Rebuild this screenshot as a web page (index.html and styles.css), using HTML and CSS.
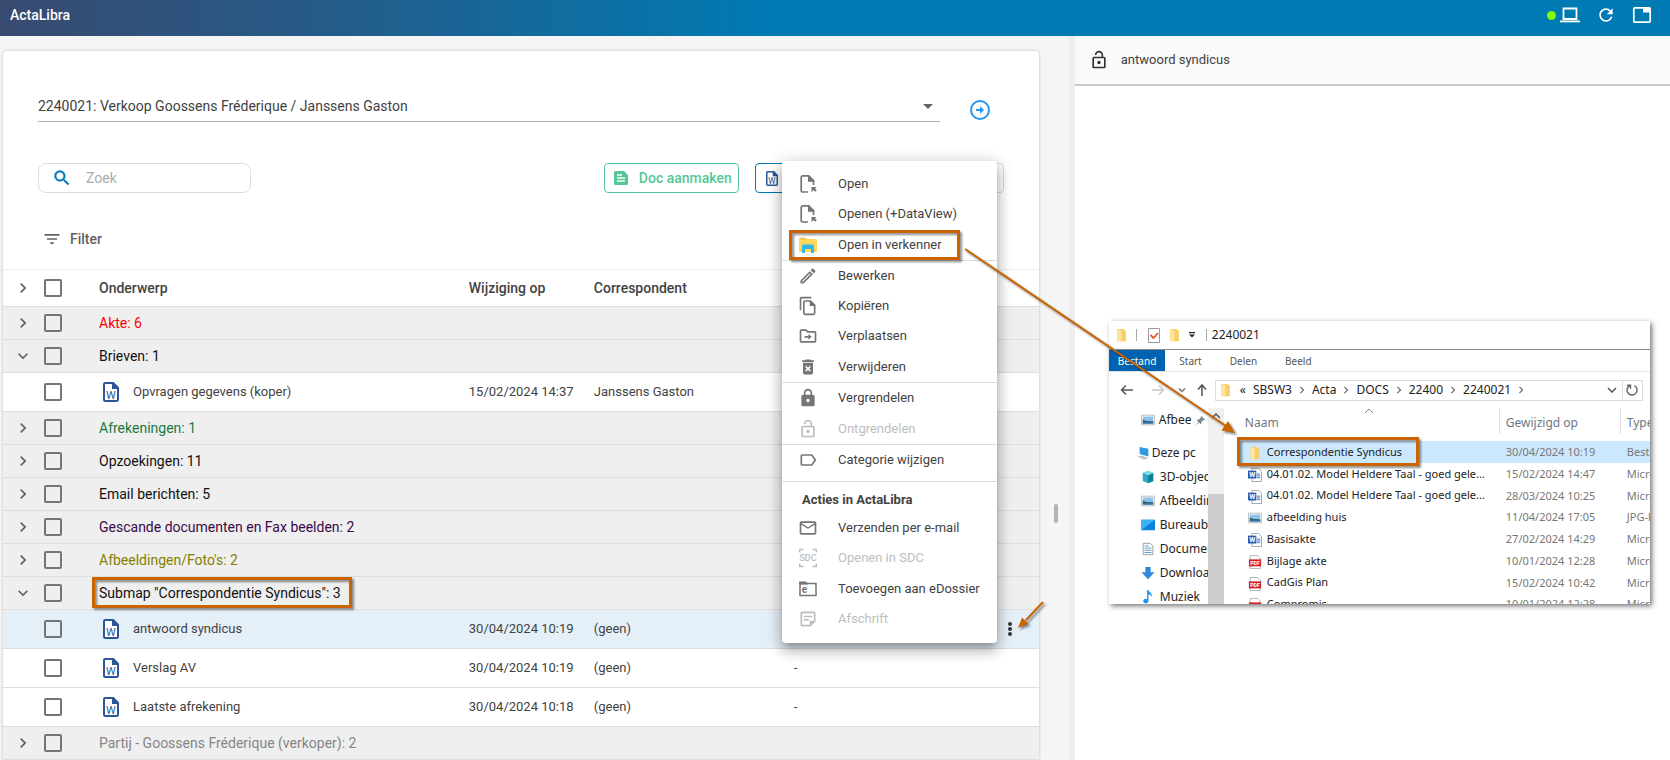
FILE: index.html
```html
<!DOCTYPE html>
<html lang="nl">
<head>
<meta charset="utf-8">
<title>ActaLibra</title>
<link rel="stylesheet" href="styles.css">
</head>
<body>
<svg class="defs" aria-hidden="true">
  <symbol id="chev" viewBox="0 0 24 24"><path d="M10 6L8.59 7.41 13.17 12l-4.58 4.59L10 18l6-6z"/></symbol>
  <symbol id="chevdown" viewBox="0 0 24 24"><path d="M16.59 8.59L12 13.17 7.41 8.59 6 10l6 6 6-6z"/></symbol>
  <symbol id="word" viewBox="0 0 16 20">
    <path d="M1 2.200A1.200 1.200 0 0 1 2.200 1H10l5 5v11.800a1.200 1.200 0 0 1-1.200 1.200H2.200A1.200 1.200 0 0 1 1 17.800z" fill="#fff" stroke="#2b579a" stroke-width="2"/>
    <path d="M9 0h1.500L16 5.500V7H9z" fill="#2b579a"/>
    <text x="8" y="17" text-anchor="middle" class="glyph-w">W</text>
  </symbol>
  <symbol id="openfile" viewBox="0 0 20 20">
    <path d="M10 18H4.700A1.500 1.500 0 0 1 3.200 16.500V3.400A1.500 1.500 0 0 1 4.700 1.900H10.500L15.500 6.900V11" fill="none" stroke="currentColor" stroke-width="1.700"/>
    <path d="M10 1.200h1.200L16.400 6.500V7.700H10zM13.500 13H18.500L17 14.500 18.800 16.300 17.300 17.800 15.500 16 13.500 18z"/>
  </symbol>
  <symbol id="verkenner" viewBox="0 0 20 20">
    <path d="M1 3.500a1 1 0 0 1 1-1h5.500l1.500 1.500h9a1 1 0 0 1 1 1V17H1z" fill="#ffd75e"/>
    <path d="M2 3.200h5l1 1.200H2z" fill="#f2c14b"/>
    <path d="M4 18v-7a1.500 1.500 0 0 1 1.500-1.500h9A1.500 1.500 0 0 1 16 11v7h-3v-4H7v4z" fill="#2bb7e8"/>
  </symbol>
  <symbol id="edit" viewBox="0 0 24 24"><path d="M14.060 9.020l.92.92L5.920 19H5v-.92l9.060-9.060M17.660 3c-.25 0-.51.1-.7.29l-1.830 1.830 3.750 3.750 1.830-1.830c.39-.39.39-1.020 0-1.410l-2.340-2.340c-.2-.2-.45-.29-.71-.29zm-3.600 3.190L3 17.250V21h3.750L17.810 9.940l-3.750-3.750z"/></symbol>
  <symbol id="copy" viewBox="0 0 24 24"><path d="M16 1H4c-1.100 0-2 .9-2 2v14h2V3h12V1z"/><path d="M7 7.500A1.500 1.500 0 0 1 8.500 6H15l5 5v9.500a1.500 1.500 0 0 1-1.500 1.500h-10A1.500 1.500 0 0 1 7 20.500z" fill="none" stroke="currentColor" stroke-width="2"/><path d="M14 6h1.500l5 5v1H14z"/></symbol>
  <symbol id="move" viewBox="0 0 24 24"><path d="M20 6h-8l-2-2H4c-1.100 0-2 .9-2 2v12c0 1.100.9 2 2 2h16c1.100 0 2-.9 2-2V8c0-1.100-.9-2-2-2zm0 12H4V6h5.170l2 2H20v10zM12.500 9.500v2.500H8v2h4.500v2.500L16.500 13z"/></symbol>
  <symbol id="delete" viewBox="0 0 24 24"><path d="M6 19c0 1.100.9 2 2 2h8c1.100 0 2-.9 2-2V7H6v12zm2.460-7.120l1.410-1.410L12 12.590l2.120-2.120 1.410 1.410L13.410 14l2.120 2.120-1.410 1.410L12 15.410l-2.120 2.120-1.410-1.410L10.590 14l-2.130-2.120zM15.500 4l-1-1h-5l-1 1H5v2h14V4z"/></symbol>
  <symbol id="lock" viewBox="0 0 24 24"><path d="M18 8h-1V6c0-2.760-2.240-5-5-5S7 3.240 7 6v2H6c-1.100 0-2 .9-2 2v10c0 1.100.9 2 2 2h12c1.100 0 2-.9 2-2V10c0-1.100-.9-2-2-2zm-6 9c-1.100 0-2-.9-2-2s.9-2 2-2 2 .9 2 2-.9 2-2 2zM9 8V6c0-1.660 1.340-3 3-3s3 1.340 3 3v2H9z"/></symbol>
  <symbol id="unlock" viewBox="0 0 24 24"><path d="M12 17c1.100 0 2-.9 2-2s-.9-2-2-2-2 .9-2 2 .9 2 2 2zm6-9h-1V6c0-2.760-2.240-5-5-5S7 3.240 7 6h1.900c0-1.710 1.390-3.100 3.100-3.100 1.710 0 3.100 1.390 3.100 3.100v2H6c-1.100 0-2 .9-2 2v10c0 1.100.9 2 2 2h12c1.100 0 2-.9 2-2V10c0-1.100-.9-2-2-2zm0 12H6V10h12v10z"/></symbol>
  <symbol id="label" viewBox="0 0 24 24"><path d="M17.630 5.840C17.270 5.330 16.670 5 16 5L5 5.010C3.900 5.010 3 5.900 3 7v10c0 1.100.9 1.990 2 1.990L16 19c.67 0 1.270-.33 1.630-.84L22 12l-4.370-6.160zM16 17H5V7h11l3.550 5L16 17z"/></symbol>
  <symbol id="mail" viewBox="0 0 24 24"><path d="M22 6c0-1.100-.9-2-2-2H4c-1.100 0-2 .9-2 2v12c0 1.100.9 2 2 2h16c1.100 0 2-.9 2-2V6zm-2 0l-8 5-8-5h16zm0 12H4V8l8 5 8-5v10z"/></symbol>
  <symbol id="sdc" viewBox="0 0 20 20"><path d="M5.500 1.500H1.700v3M14.500 1.500H18.300v3M5.500 18.500H1.700v-3M14.500 18.500H18.300v-3" fill="none" stroke="currentColor" stroke-width="1.500"/><text x="10" y="13" text-anchor="middle" class="glyph-sdc">SDC</text></symbol>
  <symbol id="edossier" viewBox="0 0 20 20"><path d="M2 4.500h16V16.500H2z" fill="none" stroke="currentColor" stroke-width="1.500"/><path d="M1.200 2.500h7l1.500 3H1.200z"/><text x="6.500" y="14" text-anchor="middle" class="glyph-e">e</text></symbol>
  <symbol id="note" viewBox="0 0 24 24"><path d="M19 3H5c-1.100 0-2 .9-2 2v14c0 1.100.9 2 2 2h10l6-6V5c0-1.100-.9-2-2-2zm0 11h-5v5H5V5h14v9zM7 8h10v2H7zM7 12h6v2H7z"/></symbol>
  <symbol id="folder" viewBox="0 0 12 16"><path d="M1 1h7l3 2v12H1z" fill="#f6cf68"/><path d="M1 1l5 2v13l-5-1.500z" fill="#ffe49b"/></symbol>
  <symbol id="wdoc" viewBox="0 0 16 16"><path d="M4.500.5H12l3.500 3.500v11.500h-11z" fill="#fff" stroke="#8c9bb0"/><path d="M10 7h4M10 9h4M10 11h4" stroke="#2b6cc4"/><path d="M0 3h9.500v9H0z" fill="#2a5fb4"/><text x="4.800" y="10.500" text-anchor="middle" class="glyph-doc">W</text></symbol>
  <symbol id="pic" viewBox="0 0 16 16"><path d="M.5 2.500h15v11H.5z" fill="#fff" stroke="#b5b5b5"/><path d="M2 4h12v8H2z" fill="#8cc1ea"/><path d="M2 7.500l4 1.500 8 .5V12H2z" fill="#2f5f6e"/><path d="M2 10.500h12V12H2z" fill="#3b78b5"/></symbol>
  <symbol id="pdf" viewBox="0 0 16 16"><path d="M2.500.5H11l3 3v12H2.500z" fill="#fff" stroke="#aaa"/><path d="M1 5h14v8H1z" fill="#d51f2d"/><text x="8" y="11.500" text-anchor="middle" class="glyph-pdf">PDF</text></symbol>
</svg>

<header class="topbar">
  <h1 class="brand">ActaLibra</h1>
  <div class="topbar-tools">
    <span class="online"></span>
    <svg class="ic20" viewBox="0 0 20 20"><path d="M3.500 3.500h13v10.500h-13z" fill="none" stroke="#fff" stroke-width="1.800"/><path d="M0 15.500h20v1.800H0z"/></svg>
    <button class="bare refresh" aria-label="Vernieuwen"><svg class="ic20" viewBox="0 0 24 24"><path d="M17.650 6.350A7.958 7.958 0 0 0 12 4c-4.420 0-7.990 3.580-7.990 8s3.570 8 7.990 8c3.730 0 6.840-2.550 7.730-6h-2.080A5.990 5.990 0 0 1 12 18c-3.310 0-6-2.690-6-6s2.690-6 6-6c1.660 0 3.140.69 4.220 1.780L13 11h7V4l-2.350 2.350z"/></svg></button>
    <button class="bare" aria-label="Tabblad"><svg class="ic20" viewBox="0 0 20 20"><path d="M2.700 2.900h14.600a.9.900 0 0 1 .9.900v12.400a.9.900 0 0 1-.9.900H2.700a.9.900 0 0 1-.9-.9V3.800a.9.900 0 0 1 .9-.9z" fill="none" stroke="#fff" stroke-width="1.700"/><path d="M11 3h7v4.500h-7z"/></svg></button>
  </div>
</header>

<main class="workspace">
  <section class="left">
    <div class="card">
      <div class="dossier">
        <div class="select-wrap">
          <select class="dossier-select" aria-label="Dossier"><option>2240021: Verkoop Goossens Fréderique / Janssens Gaston</option></select>
          <svg class="caret" viewBox="0 0 10 5"><path d="M0 0h10L5 5z"/></svg>
        </div>
        <button class="bare go" aria-label="Ga naar dossier"><svg class="ic20" viewBox="0 0 20 20"><circle cx="10" cy="10" r="9" fill="none" stroke="currentColor" stroke-width="2"/><path d="M6 9h4V6.200L14 10l-4 3.800V11H6z"/></svg></button>
      </div>
      <div class="toolbar">
        <label class="search">
          <svg class="ic20" viewBox="0 0 24 24"><path d="M15.500 14h-.79l-.28-.27A6.471 6.471 0 0 0 16 9.500 6.500 6.500 0 1 0 9.500 16c1.610 0 3.090-.59 4.230-1.570l.27.28v.79l5 4.990L20.490 19l-4.990-5zm-6 0C7.010 14 5 11.990 5 9.500S7.010 5 9.500 5 14 7.010 14 9.500 11.990 14 9.500 14z" stroke="currentColor" stroke-width=".5"/></svg>
          <input type="search" placeholder="Zoek">
        </label>
        <div class="actions">
          <button class="btn green"><svg class="btn-ic" viewBox="0 0 14 14"><path d="M1.500 0H10l4 4v8.500a1.500 1.500 0 0 1-1.500 1.500h-11A1.500 1.500 0 0 1 0 12.500v-11A1.500 1.500 0 0 1 1.500 0z"/><path d="M3 4h5M3 7h8M3 10h8" stroke="#fff" stroke-width="1.300"/></svg>Doc aanmaken</button>
          <button class="btn blue" aria-label="Word"><svg class="word-sm"><use href="#word"/></svg></button>
          <button class="btn grey" aria-label="Meer" disabled></button>
        </div>
      </div>
      <button class="bare filter"><svg class="ic20" viewBox="0 0 24 24"><path d="M10 18h4v-2h-4v2zM3 6v2h18V6H3zm3 7h12v-2H6v2z"/></svg>Filter</button>

      <table class="docs">
        <colgroup><col class="c-exp"><col class="c-chk"><col><col class="c-date"><col class="c-corr"><col class="c-extra"><col class="c-more"></colgroup>
        <thead><tr><th><svg class="chev"><use href="#chev"/></svg></th><th><input type="checkbox" aria-label="Alles"></th><th>Onderwerp</th><th>Wijziging op</th><th>Correspondent</th><th></th><th></th></tr></thead>
        <tbody>
          <tr class="group red"><td><svg class="chev"><use href="#chev"/></svg></td><td><input type="checkbox" aria-label="Akte"></td><td colspan="5">Akte: 6</td></tr>
          <tr class="group"><td><svg class="chev"><use href="#chevdown"/></svg></td><td><input type="checkbox" aria-label="Brieven"></td><td colspan="5">Brieven: 1</td></tr>
          <tr class="doc"><td></td><td><input type="checkbox" aria-label="Opvragen gegevens (koper)"></td><td><span class="name"><svg class="word"><use href="#word"/></svg>Opvragen gegevens (koper)</span></td><td>15/02/2024 14:37</td><td>Janssens Gaston</td><td></td><td></td></tr>
          <tr class="group green"><td><svg class="chev"><use href="#chev"/></svg></td><td><input type="checkbox" aria-label="Afrekeningen"></td><td colspan="5">Afrekeningen: 1</td></tr>
          <tr class="group"><td><svg class="chev"><use href="#chev"/></svg></td><td><input type="checkbox" aria-label="Opzoekingen"></td><td colspan="5">Opzoekingen: 11</td></tr>
          <tr class="group"><td><svg class="chev"><use href="#chev"/></svg></td><td><input type="checkbox" aria-label="Email berichten"></td><td colspan="5">Email berichten: 5</td></tr>
          <tr class="group purple"><td><svg class="chev"><use href="#chev"/></svg></td><td><input type="checkbox" aria-label="Gescande documenten"></td><td colspan="5">Gescande documenten en Fax beelden: 2</td></tr>
          <tr class="group olive"><td><svg class="chev"><use href="#chev"/></svg></td><td><input type="checkbox" aria-label="Afbeeldingen"></td><td colspan="5">Afbeeldingen/Foto's: 2</td></tr>
          <tr class="group"><td><svg class="chev"><use href="#chevdown"/></svg></td><td><input type="checkbox" aria-label="Submap"></td><td colspan="5">Submap "Correspondentie Syndicus": 3</td></tr>
          <tr class="doc selected"><td></td><td><input type="checkbox" aria-label="antwoord syndicus"></td><td><span class="name"><svg class="word"><use href="#word"/></svg>antwoord syndicus</span></td><td>30/04/2024 10:19</td><td>(geen)</td><td></td><td><button class="bare more" aria-label="Menu"><svg viewBox="0 0 4 14"><circle cx="2" cy="2" r="2"/><circle cx="2" cy="7" r="2"/><circle cx="2" cy="12" r="2"/></svg></button></td></tr>
          <tr class="doc"><td></td><td><input type="checkbox" aria-label="Verslag AV"></td><td><span class="name"><svg class="word"><use href="#word"/></svg>Verslag AV</span></td><td>30/04/2024 10:19</td><td>(geen)</td><td>-</td><td></td></tr>
          <tr class="doc"><td></td><td><input type="checkbox" aria-label="Laatste afrekening"></td><td><span class="name"><svg class="word"><use href="#word"/></svg>Laatste afrekening</span></td><td>30/04/2024 10:18</td><td>(geen)</td><td>-</td><td></td></tr>
          <tr class="group grey"><td><svg class="chev"><use href="#chev"/></svg></td><td><input type="checkbox" aria-label="Partij"></td><td colspan="5">Partij - Goossens Fréderique (verkoper): 2</td></tr>
        </tbody>
      </table>
    </div>
    <span class="grip"></span>
  </section>
  <div class="splitter"></div>
  <section class="right">
    <div class="preview-head"><svg class="lockic"><use href="#unlock"/></svg>antwoord syndicus</div>
    <div class="stage">
      <div class="explorer">
        <div class="ex-title">
          <svg class="fold"><use href="#folder"/></svg><i class="bar"></i>
          <svg class="tick" viewBox="0 0 12 15"><path d="M.5.5h11v14H.5z" fill="#fff" stroke="#999"/><path d="M2.500 7l3 3 4.500-5" fill="none" stroke="#e5542b" stroke-width="1.800"/></svg>
          <svg class="fold"><use href="#folder"/></svg>
          <svg class="qat" viewBox="0 0 6 6"><path d="M0 0h6v1.200H0zM0 2.500h6L3 5.500z"/></svg>
          <span class="ex-name">2240021</span>
        </div>
        <nav class="ex-tabs"><a class="on" href="#">Bestand</a><a href="#">Start</a><a href="#">Delen</a><a href="#">Beeld</a></nav>
        <div class="ex-nav">
          <svg class="nav-arrows" viewBox="0 0 88 14"><path d="M14 7H2.500M7 2.500L2.500 7 7 11.500" stroke="#555"/><path d="M33 7h11.500M40 2.500L44.500 7 40 11.500" stroke="#c9c9c9"/><path d="M60 5.500l3 3 3-3" stroke="#777"/><path d="M83 13V2M79 6.500l4-4.500 4 4.500" stroke="#555"/></svg>
          <div class="path">
            <svg class="fold"><use href="#folder"/></svg><span class="lead">«</span>
            <span>SBSW3</span><svg class="sep"><use href="#chev"/></svg><span>Acta</span><svg class="sep"><use href="#chev"/></svg><span>DOCS</span><svg class="sep"><use href="#chev"/></svg><span>22400</span><svg class="sep"><use href="#chev"/></svg><span>2240021</span><svg class="sep"><use href="#chev"/></svg>
            <svg class="drop" viewBox="0 0 10 6"><path d="M1 1l4 4 4-4" fill="none" stroke="#555" stroke-width="1.500"/></svg>
            <button class="bare reload" aria-label="Vernieuwen"><svg viewBox="0 0 12 12"><path d="M4 1.500A5 5 0 1 0 8.500 1.700M1 1.200h3.500v3.500" fill="none" stroke="#666" stroke-width="1.400"/></svg></button>
          </div>
        </div>
        <div class="ex-body">
          <ul class="tree">
            <li class="quick"><svg class="tic"><use href="#pic"/></svg>Afbee<svg class="pin" viewBox="0 0 10 10"><path d="M6 0l4 4-1 .8-1 0L6 7l0 1.600-1 .6L3.300 7.300.5 9.800l-.4-.4L2.700 6.700.9 5l.6-1L3.200 4 5.200 2V1z" fill="#7d8a96"/></svg></li>
            <li class="pc"><svg class="tic" viewBox="0 0 16 16"><path d="M3 1l10 2v9L3 9z" fill="#2f9be0"/><path d="M0 12l6-1 7 3-5 1.500z" fill="#b9c2c9"/></svg>Deze pc</li>
            <li><svg class="tic" viewBox="0 0 16 16"><path d="M8 1l6 2.500v9L8 15l-6-2.500v-9z" fill="#2ea9c4"/><path d="M8 6l6-2.500v9L8 15z" fill="#11809b"/><path d="M8 1l6 2.500L8 6 2 3.500z" fill="#7fdcea"/></svg>3D-objecten</li>
            <li><svg class="tic"><use href="#pic"/></svg>Afbeeldingen</li>
            <li><svg class="tic" viewBox="0 0 16 16"><path d="M0 2h16v12H0z" fill="#0a84d8"/><path d="M0 14L16 2H0z" fill="#3fb0f5"/></svg>Bureaublad</li>
            <li><svg class="tic" viewBox="0 0 16 16"><path d="M2.500 1.500h8l3 3v10h-11z" fill="#fff" stroke="#8d99a5"/><path d="M4 7h8M4 9.500h8M4 12h8M4 4.500h5" stroke="#4f93c8"/></svg>Documenten</li>
            <li><svg class="tic" viewBox="0 0 16 16"><path d="M5 1h6v6h4.500L8 15 .5 7H5z" fill="#2f86dd"/></svg>Downloads</li>
            <li><svg class="tic" viewBox="0 0 16 16"><path d="M7 0h1.500c.5 3 4.500 3 4 8-1-2.500-2.500-3-4-3v7.500A3 2.500 0 1 1 7 10.500z" fill="#1e90e8"/></svg>Muziek</li>
          </ul>
          <div class="ex-scroll"><svg viewBox="0 0 10 6"><path d="M1 5l4-4 4 4" fill="none" stroke="#555" stroke-width="1.500"/></svg><i></i></div>
          <div class="ex-main">
            <svg class="sort" viewBox="0 0 10 6"><path d="M1 5l4-4 4 4" fill="none" stroke="#888"/></svg>
            <table class="files">
              <colgroup><col><col class="f-date"><col class="f-type"></colgroup>
              <thead><tr><th>Naam</th><th>Gewijzigd op</th><th>Type</th></tr></thead>
              <tbody>
                <tr class="hot"><td><svg class="fic"><use href="#folder"/></svg>Correspondentie Syndicus</td><td>30/04/2024 10:19</td><td>Bestandsmap</td></tr>
                <tr><td><svg class="fic"><use href="#wdoc"/></svg>04.01.02. Model Heldere Taal - goed gele...</td><td>15/02/2024 14:47</td><td>Microsoft</td></tr>
                <tr><td><svg class="fic"><use href="#wdoc"/></svg>04.01.02. Model Heldere Taal - goed gele...</td><td>28/03/2024 10:25</td><td>Microsoft</td></tr>
                <tr><td><svg class="fic"><use href="#pic"/></svg>afbeelding huis</td><td>11/04/2024 17:05</td><td>JPG-best</td></tr>
                <tr><td><svg class="fic"><use href="#wdoc"/></svg>Basisakte</td><td>27/02/2024 14:29</td><td>Microsoft</td></tr>
                <tr><td><svg class="fic"><use href="#pdf"/></svg>Bijlage akte</td><td>10/01/2024 12:28</td><td>Microsoft</td></tr>
                <tr><td><svg class="fic"><use href="#pdf"/></svg>CadGis Plan</td><td>15/02/2024 10:42</td><td>Microsoft</td></tr>
                <tr><td><svg class="fic"><use href="#pdf"/></svg>Compromis</td><td>10/01/2024 12:28</td><td>Microsoft</td></tr>
              </tbody>
            </table>
          </div>
        </div>
      </div>
    </div>
  </section>
</main>

<div class="menu" role="menu">
  <div class="menu-group">
    <button class="item"><svg><use href="#openfile"/></svg>Open</button>
    <button class="item"><svg><use href="#openfile"/></svg>Openen (+DataView)</button>
    <button class="item tall"><svg><use href="#verkenner"/></svg>Open in verkenner</button>
  </div>
  <div class="menu-group">
    <button class="item"><svg><use href="#edit"/></svg>Bewerken</button>
    <button class="item"><svg><use href="#copy"/></svg>Kopiëren</button>
    <button class="item"><svg><use href="#move"/></svg>Verplaatsen</button>
    <button class="item tall"><svg><use href="#delete"/></svg>Verwijderen</button>
  </div>
  <div class="menu-group">
    <button class="item"><svg><use href="#lock"/></svg>Vergrendelen</button>
    <button class="item tall" disabled><svg><use href="#unlock"/></svg>Ontgrendelen</button>
  </div>
  <div class="menu-group wide">
    <button class="item"><svg><use href="#label"/></svg>Categorie wijzigen</button>
  </div>
  <div class="menu-group">
    <h2 class="menu-title">Acties in ActaLibra</h2>
    <button class="item"><svg><use href="#mail"/></svg>Verzenden per e-mail</button>
    <button class="item" disabled><svg><use href="#sdc"/></svg>Openen in SDC</button>
    <button class="item tall"><svg><use href="#edossier"/></svg>Toevoegen aan eDossier</button>
    <button class="item" disabled><svg><use href="#note"/></svg>Afschrift</button>
  </div>
</div>

<svg class="marks" viewBox="0 0 1670 760" aria-hidden="true">
  <g class="mark-shadow" fill="none" stroke="#ca6400">
    <path d="M790.500 231.500h168v27h-168zM93.500 578.500h257v28h-257zM1238.500 438.500h179v26h-179z" stroke-width="3"/>
    <path d="M965 249L1226 426M1043 602L1026 620" stroke-width="2"/>
    <path d="M1235 433l-13.500-2.500 6.500-9.500zM1018 628l4-10.500 6.500 6z" fill="#ca6400" stroke="none"/>
  </g>
</svg>
</body>
</html>
```

FILE: styles.css
```css
* { box-sizing: border-box; }
body {
  margin: 0;
  min-height: 100vh;
  display: flex;
  flex-direction: column;
  position: relative;
  overflow: hidden;
  background: #f5f5f5;
  color: #424242;
  font: 14px/20px Roboto, sans-serif;
}
.defs { display: none; }
svg { fill: currentColor; flex: none; display: block; }
button, input, select { font: inherit; color: inherit; }
.bare { border: 0; padding: 0; background: none; }
.ic20 { width: 20px; height: 20px; }
.glyph-w { font: 400 11px Roboto, sans-serif; fill: #2b579a; }
.glyph-sdc { font: 500 9px Roboto, sans-serif; }
.glyph-e { font: 700 10px Roboto, sans-serif; }
.glyph-doc { font: 700 8px Roboto, sans-serif; fill: #fff; }
.glyph-pdf { font: 700 6px Roboto, sans-serif; fill: #fff; }

.topbar {
  height: 36px;
  padding: 0 18px 6px 10px;
  display: flex;
  justify-content: space-between;
  align-items: center;
  color: #fff;
  background: linear-gradient(90deg, #394a70 0, #265a86 18%, #007ab3 46%);
}
.brand { margin: 0; font-size: 14px; font-weight: 500; }
.topbar-tools { display: flex; align-items: center; gap: 16px; }
.online { width: 9px; height: 9px; border-radius: 50%; background: #7dff00; margin-right: -12px; }

.workspace { flex: 1; display: flex; min-height: 0; }
.left { flex: 0 0 64%; display: flex; padding: 15px 0 0 3px; }
.card {
  flex: 1;
  background: #fff;
  border-radius: 4px 4px 0 0;
  box-shadow: 0 0 3px rgba(0,0,0,.25);
  padding-top: 36px;
}
.grip { width: 4px; height: 19px; margin: 453px 11px 0 15px; border-radius: 2px; background: #b3b3b3; }
.splitter { width: 6px; background: #eee; }
.right { flex: 1; display: flex; flex-direction: column; background: #fff; }

.dossier { display: flex; align-items: center; padding: 0 49px 0 35px; gap: 30px; }
.select-wrap { flex: 1; display: flex; align-items: center; border-bottom: 1px solid #b0b0b0; height: 35px; }
.dossier-select { flex: 1; appearance: none; border: 0; background: none; padding: 4px 0 0; height: 34px; }
.caret { width: 10px; height: 5px; margin: 4px 7px 0 0; color: #666; }
.go { color: #2196f3; margin-top: 10px; }

.toolbar { display: flex; justify-content: space-between; padding: 0 35px; margin-top: 41px; }
.search { display: flex; align-items: center; gap: 14px; width: 213px; height: 30px; padding: 0 13px; border: 1px solid #dcdcdc; border-radius: 8px; color: #0079b3; }
.search input { border: 0; outline: 0; width: 140px; padding: 0; background: none; color: #424242; }
.search input::placeholder { color: #aaa; }
.actions { display: flex; gap: 16px; }
.btn { height: 30px; display: flex; align-items: center; border: 1px solid; border-radius: 4px; background: #fff; font-weight: 500; padding: 0 9px; white-space: nowrap; }
.btn.green { gap: 11px; color: #55c797; width: 135px; }
.btn.blue { width: 117px; padding: 0 10px; color: #0079b3; }
.btn.grey { width: 116px; border-color: #d8d8d8; }
.btn-ic { width: 14px; height: 14px; }
.word-sm { width: 12px; height: 15px; }
.filter { display: flex; align-items: center; gap: 8px; margin: 36px 0 20px 39px; color: #616161; font-weight: 500; }

.docs { width: 100%; table-layout: fixed; border-collapse: separate; border-spacing: 0; border-top: 1px solid #eee; }
.docs th, .docs td { padding: 0; text-align: left; border-bottom: 1px solid #dedede; white-space: nowrap; }
.docs th { height: 37px; font-weight: 500; }
.c-exp { width: 41px; }
.c-chk { width: 55px; }
.c-date { width: 125px; }
.c-corr { width: 200px; }
.c-extra { width: 214px; }
.c-more { width: 31px; }
.chev { width: 20px; height: 20px; margin-left: 10px; color: #616161; }
.docs input { appearance: none; display: block; width: 18px; height: 18px; margin: 0; border: 2px solid #757575; border-radius: 2px; }
.group td { height: 33px; background: #efefef; color: #111; }
.group.red td { color: #f00; }
.group.green td { color: #1b7a43; }
.group.purple td { color: #3a0a4a; }
.group.olive td { color: #858000; }
.group.grey td { color: #858585; }
.doc td { height: 39px; font-size: 13px; }
.selected td { background: #e5eff8; }
.name { display: flex; align-items: center; gap: 14px; padding-left: 4px; }
.word { width: 16px; height: 20px; }
.more { color: #333; display: block; }
.more svg { width: 4px; height: 14px; }

.preview-head { display: flex; align-items: center; gap: 12px; height: 50px; padding: 0 14px; background: #fafafa; border-bottom: 2px solid #ccc; font-size: 13px; }
.lockic { width: 20px; height: 20px; color: #333; }
.stage { position: relative; flex: 1; }

.explorer {
  position: absolute;
  left: 34px;
  top: 235px;
  width: 541px;
  height: 283px;
  overflow: hidden;
  background: #fff;
  color: #222;
  box-shadow: 2px 2px 5px rgba(0,0,0,.55);
  font: 11px/16px "Noto Sans", sans-serif;
  display: flex;
  flex-direction: column;
}
.ex-title { display: flex; align-items: center; height: 29px; padding-left: 7px; gap: 9px; font-size: 11px; border-bottom: 1px solid #888; flex: none; }
.bar { width: 1px; height: 12px; background: #aaa; }
.fold { width: 11px; height: 14px; }
.tick { width: 12px; height: 15px; margin-left: 2px; }
.qat { width: 6px; height: 6px; }
.ex-name { border-left: 1px solid #aaa; margin-left: 2px; padding-left: 5px; line-height: 12px; font-size: 12px; }
.ex-tabs { display: flex; height: 22px; border-bottom: 1px solid #e3e3e3; flex: none; font-size: 10px; }
.ex-tabs a { color: #555; text-decoration: none; padding: 3px 14px 0; }
.ex-tabs .on { background: #0063b1; color: #fff; padding: 3px 9px 0; }
.ex-nav { display: flex; align-items: center; height: 36px; padding: 0 7px 0 10px; gap: 8px; flex: none; }
.nav-arrows { width: 88px; height: 14px; fill: none; stroke-width: 1.5; }
.path { flex: 1; display: flex; align-items: center; gap: 3px; height: 21px; border: 1px solid #dcdcdc; padding-left: 4px; font-size: 12px; }
.lead { margin: 0 4px 0 6px; }
.sep { width: 14px; height: 14px; color: #666; }
.drop { width: 10px; height: 6px; margin: 0 2px 0 auto; }
.reload { width: 20px; height: 19px; border-left: 1px solid #dcdcdc; display: grid; place-items: center; }
.reload svg { width: 12px; height: 12px; }
.ex-body { display: flex; flex: 1; min-height: 0; }
.tree { width: 99px; margin: 0; padding: 0; list-style: none; overflow: hidden; font-size: 12px; }
.tree li { display: flex; align-items: center; gap: 5px; height: 24px; padding-left: 32px; white-space: nowrap; }
.tree .quick { margin-bottom: 9px; gap: 4px; }
.tree .pc { padding-left: 28px; gap: 1px; }
.tic { width: 14px; height: 14px; }
.pin { width: 9px; height: 9px; }
.ex-scroll { width: 16px; background: #f0f0f0; display: flex; flex-direction: column; justify-content: space-between; align-items: center; padding-top: 5px; }
.ex-scroll svg { width: 10px; height: 6px; }
.ex-scroll i { width: 16px; height: 110px; background: #cdcdcd; }
.ex-main { flex: 1; min-width: 0; position: relative; padding-left: 16px; }
.sort { position: absolute; left: 140px; top: 0; width: 10px; height: 6px; }
.files { width: 100%; table-layout: fixed; border-collapse: separate; border-spacing: 0; }
.files th, .files td { padding: 0 0 0 7px; text-align: left; white-space: nowrap; overflow: hidden; font-weight: 400; }
.files th { height: 33px; padding-bottom: 4px; color: #6b7785; font-size: 12px; }
.files th + th { background: linear-gradient(#ddd, #ddd) 0 0 / 1px 26px no-repeat; }
.files th:first-child, .files td:first-child { padding-left: 5px; }
.files td { height: 21px; color: #777; }
.files tr:nth-child(even) td, .files tr:nth-child(5) td { height: 22px; }
.files td:first-child { color: #222; }
.files .fic { display: inline-block; width: 14px; height: 14px; vertical-align: middle; margin: 0 5px 0 3px; }
.files .hot td { background: #cce8ff; height: 22px; }
.f-date { width: 121px; }
.f-type { width: 30px; }

.menu {
  position: absolute;
  left: 782px;
  top: 161px;
  width: 215px;
  padding: 8px 0 9px;
  background: #fff;
  border-radius: 4px;
  box-shadow: 0 5px 6px -3px rgba(0,0,0,.2), 0 9px 12px 1px rgba(0,0,0,.14), 0 3px 16px 2px rgba(0,0,0,.2);
}
.menu-group { display: flex; flex-direction: column; }
.menu-group + .menu-group { border-top: 1px solid #dcdcdc; }
.menu-group.wide { padding-bottom: 6px; }
.item { display: flex; align-items: center; gap: 20px; height: 30px; padding: 0 16px; border: 0; background: none; font-size: 13px; white-space: nowrap; }
.item.tall { height: 31px; padding-top: 1px; }
.item svg { width: 20px; height: 20px; color: #757575; }
.item:disabled, .item:disabled svg { color: #bdbdbd; }
.menu-title { margin: 0; padding: 8px 20px 3px; font-size: 13px; line-height: 20px; font-weight: 700; }

.marks { position: absolute; left: 0; top: 0; width: 1670px; height: 760px; pointer-events: none; }
.mark-shadow { filter: drop-shadow(2px 2px 1px rgba(0,0,0,.45)); }
```
